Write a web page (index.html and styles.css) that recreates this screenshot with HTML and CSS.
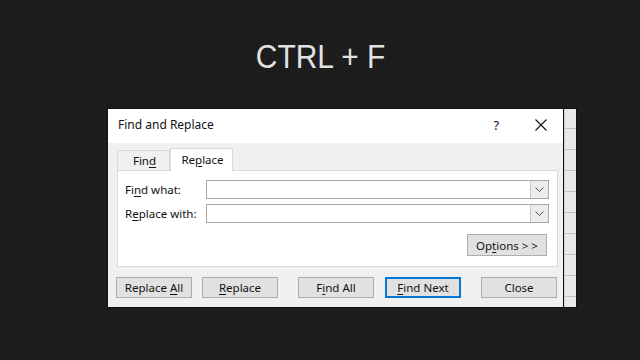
FILE: index.html
```html
<!DOCTYPE html>
<html>
<head>
<meta charset="utf-8">
<link rel="stylesheet" href="styles.css">
</head>
<body>
<div class="slide">
  <h1 class="title"><span class="title-text">CTRL + F</span></h1>
  <div class="shot">
    <div class="dialog">
      <div class="titlebar">
        <span class="caption">Find and Replace</span>
        <span class="help">?</span>
        <svg class="xicon" width="12" height="12" viewBox="0 0 12 12"><path d="M0.5 0.5L11.5 11.5M11.5 0.5L0.5 11.5" stroke="#111" stroke-width="1.1" fill="none"/></svg>
      </div>
      <div class="body">
        <div class="tabs">
          <div class="tab"><span>Fin<u>d</u></span></div>
          <div class="tab active"><span>Re<u>p</u>lace</span></div>
        </div>
        <div class="panel">
          <div class="row">
            <label class="lbl">Fi<u>n</u>d what:</label>
            <div class="combo"><div class="field"></div><div class="drop"><svg width="9" height="5" viewBox="0 0 9 5"><path d="M0.5 0.5L4.5 4.5L8.5 0.5" stroke="#555" stroke-width="1" fill="none"/></svg></div></div>
          </div>
          <div class="row">
            <label class="lbl">R<u>e</u>place with:</label>
            <div class="combo"><div class="field"></div><div class="drop"><svg width="9" height="5" viewBox="0 0 9 5"><path d="M0.5 0.5L4.5 4.5L8.5 0.5" stroke="#555" stroke-width="1" fill="none"/></svg></div></div>
          </div>
          <div class="optrow">
            <div class="btn opt"><span>Op<u>t</u>ions &gt; &gt;</span></div>
          </div>
        </div>
        <div class="buttons">
          <div class="btn"><span>Replace <u>A</u>ll</span></div>
          <div class="btn gap1"><span><u>R</u>eplace</span></div>
          <div class="btn gap2"><span>F<u>i</u>nd All</span></div>
          <div class="btn gap1 default"><span><u>F</u>ind Next</span></div>
          <div class="btn gap2"><span>Close</span></div>
        </div>
      </div>
    </div>
    <div class="sheet">
      <div class="cell"></div><div class="cell"></div><div class="cell"></div><div class="cell"></div><div class="cell"></div><div class="cell"></div><div class="cell"></div><div class="cell"></div><div class="cell"></div><div class="cell"></div>
    </div>
  </div>
</div>
</body>
</html>
```
FILE: styles.css
```css
* { box-sizing: border-box; }
html, body { margin: 0; padding: 0; }
body { width: 640px; height: 360px; overflow: hidden; }
.slide {
  width: 640px; height: 360px;
  background-color: #1c1c1c;
  background-image:
    repeating-linear-gradient(90deg, rgba(255,255,255,0.012) 0 1px, transparent 1px 3px),
    repeating-linear-gradient(0deg, rgba(0,0,0,0.05) 0 1px, transparent 1px 4px);
  display: flex; flex-direction: column;
  padding-top: 36px;
}
.title {
  margin: 0; height: 72px;
  text-align: center;
  font-family: "Liberation Sans", Arial, sans-serif;
  font-weight: normal; font-size: 34px; line-height: 40px;
  color: #e2e2e2;
}
.title-text { display: inline-block; transform: scaleX(0.88); margin-left: 2px; }
.shot {
  margin-left: 107px; width: 470px; height: 200px;
  display: flex;
  border: 1px solid #111;
  background: #111;
}
.dialog {
  width: 456px;
  background: #f0f0f0;
  font-family: "Noto Sans", "Open Sans", sans-serif;
  font-size: 11.5px; color: #111;
  display: flex; flex-direction: column;
}
u { text-decoration: underline; text-underline-offset: 2px; text-decoration-thickness: 1px; }
.titlebar {
  height: 34px; background: #fff;
  display: flex; align-items: center;
  padding-left: 10px; padding-bottom: 3px;
}
.caption { font-size: 12px; flex: 1; }
.help { font-size: 13px; margin-right: 36px; }
.xicon { margin-right: 16px; }
.body { padding: 4px 0 0 8px; flex: 1; }
.tabs { display: flex; align-items: flex-end; height: 23px; margin-left: 1px; }
.tab {
  height: 20px; width: 53px;
  border: 1px solid #d9d9d9; border-bottom: none;
  background: #f0f0f0;
  display: flex; align-items: center; justify-content: center;
  padding-left: 2px;
}
.tab.active {
  height: 23px; width: 63px; background: #fff;
  margin-bottom: -1px; position: relative; z-index: 1;
  padding-bottom: 2px;
}
.panel {
  width: 441px; height: 97px;
  margin-left: 1px;
  background: #fff; border: 1px solid #d9d9d9;
  padding: 9px 8px 0 7px;
}
.row { display: flex; align-items: center; height: 19px; margin-bottom: 5px; }
.lbl { width: 81px; }
.combo { flex: 1; display: flex; height: 19px; border: 1px solid #a8a8a8; }
.field { flex: 1; background: #fff; }
.drop {
  width: 18px; border-left: 1px solid #c6c6c6; background: #ececec;
  display: flex; align-items: center; justify-content: center;
}
.optrow { display: flex; justify-content: flex-end; padding-top: 6px; padding-right: 2px; }
.btn {
  width: 76px; height: 21px;
  background: #e1e1e1; border: 1px solid #adadad;
  display: flex; align-items: center; justify-content: center;
  font-size: 11.5px;
}
.btn.opt { width: 80px; height: 22px; }
.buttons { display: flex; margin-top: 10px; }
.gap1 { margin-left: 10px; }
.gap2 { margin-left: 20px; }
.btn.default { border: 2px solid #0078d7; margin-left: 11px; }
.sheet {
  width: 12px; margin-left: 1px;
  background: #e9e9e9;
  border-left: 1px solid #cfcfcf;
  display: flex; flex-direction: column;
  overflow: hidden;
}
.cell { height: 21px; border-bottom: 1px solid #c4c4c4; flex: none; }
.cell:first-child { height: 20px; }
```
